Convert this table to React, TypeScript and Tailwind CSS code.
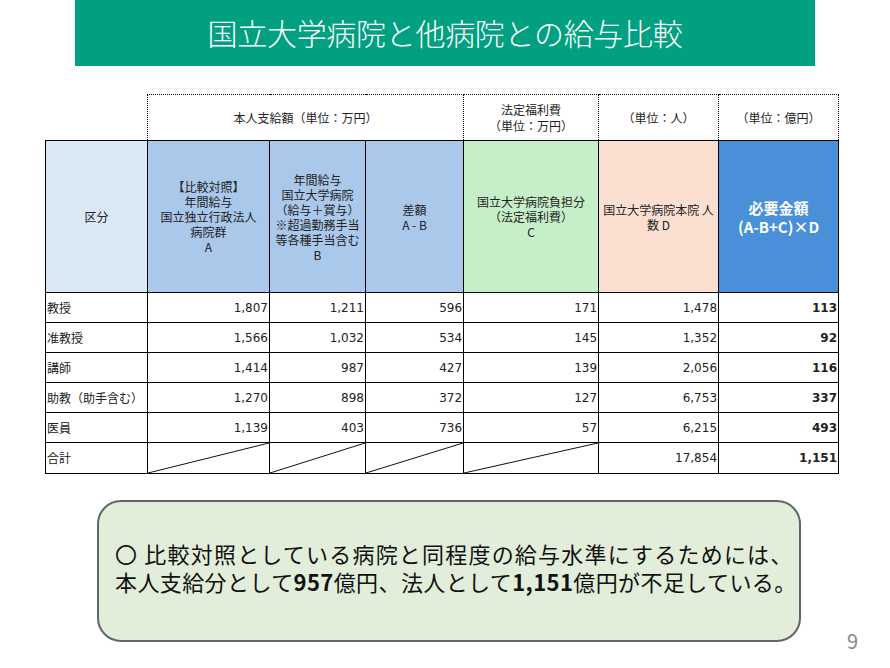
const jp = "font-['Noto_Sans_CJK_JP',sans-serif]";
const num = "font-['DejaVu_Sans','Noto_Sans_CJK_JP',sans-serif]";

const rows = [
  ["教授", "1,807", "1,211", "596", "171", "1,478", "113"],
  ["准教授", "1,566", "1,032", "534", "145", "1,352", "92"],
  ["講師", "1,414", "987", "427", "139", "2,056", "116"],
  ["助教（助手含む）", "1,270", "898", "372", "127", "6,753", "337"],
  ["医員", "1,139", "403", "736", "57", "6,215", "493"],
];

function Diagonal() {
  return (
    <td className="relative border border-black p-0">
      <svg className="absolute inset-0 h-full w-full" preserveAspectRatio="none" viewBox="0 0 100 100">
        <line x1="0" y1="100" x2="100" y2="0" stroke="#111" strokeWidth="1" vectorEffect="non-scaling-stroke" />
      </svg>
    </td>
  );
}

export default function App() {
  return (
    <div className={`relative h-[668px] w-[890px] overflow-hidden bg-white text-[#222] ${jp}`}>
      <div className="ml-[75px] flex h-[66px] w-[740px] items-center justify-center bg-[#00a080] pb-[2px]">
        <h1 className="text-[30px] font-light tracking-[-0.3px] text-white">国立大学病院と他病院との給与比較</h1>
      </div>

      <table className="ml-[45px] mt-[28px] w-[793px] table-fixed border-collapse text-[12px]">
        <colgroup>
          <col className="w-[102px]" />
          <col className="w-[122px]" />
          <col className="w-[96px]" />
          <col className="w-[98px]" />
          <col className="w-[135px]" />
          <col className="w-[120px]" />
          <col className="w-[120px]" />
        </colgroup>
        <thead>
          <tr className="h-[46px] text-center leading-[16px]">
            <th className="border-0 font-normal"></th>
            <th colSpan={3} className="border border-dotted border-black font-normal">本人支給額（単位：万円）</th>
            <th className="border border-dotted border-black font-normal">
              法定福利費
              <br />
              （単位：万円）
            </th>
            <th className="border border-dotted border-black font-normal">（単位：人）</th>
            <th className="border border-dotted border-black font-normal">（単位：億円）</th>
          </tr>
          <tr className="h-[152px] text-center leading-[15px]">
            <th className="border border-black bg-[#dbe8f6] font-normal">区分</th>
            <th className="border border-black bg-[#a9c8ea] font-normal">
              【比較対照】
              <br />
              年間給与
              <br />
              国立独立行政法人
              <br />
              病院群
              <br />A
            </th>
            <th className="border border-black bg-[#a9c8ea] font-normal">
              年間給与
              <br />
              国立大学病院
              <br />
              （給与＋賞与）
              <br />
              ※超過勤務手当
              <br />
              等各種手当含む
              <br />B
            </th>
            <th className="border border-black bg-[#a9c8ea] font-normal">
              差額
              <br />A - B
            </th>
            <th className="border border-black bg-[#c5efc9] font-normal">
              国立大学病院負担分
              <br />
              （法定福利費）
              <br />C
            </th>
            <th className="border border-black bg-[#fbe0d2] font-normal">
              国立大学病院本院 人
              <br />数 D
            </th>
            <th className="border border-black bg-[#4a90d9] text-[15px] font-bold leading-[19px] text-white">
              必要金額
              <br />
              (A-B+C)×D
            </th>
          </tr>
        </thead>
        <tbody>
          {rows.map((r) => (
            <tr key={r[0]} className="h-[30px]">
              <td className="border border-black px-[1px] text-left">{r[0]}</td>
              {r.slice(1, 6).map((v, i) => (
                <td key={i} className={`border border-black px-[1px] text-right ${num}`}>
                  {v}
                </td>
              ))}
              <td className={`border border-black px-[1px] text-right font-bold ${num}`}>{r[6]}</td>
            </tr>
          ))}
          <tr className="h-[31px]">
            <td className="border border-black px-[1px] text-left">合計</td>
            <Diagonal />
            <Diagonal />
            <Diagonal />
            <Diagonal />
            <td className={`border border-black px-[1px] text-right ${num}`}>17,854</td>
            <td className={`border border-black px-[1px] text-right font-bold ${num}`}>1,151</td>
          </tr>
        </tbody>
      </table>

      <div className="mt-[26px] flex items-end">
        <div className="ml-[97px] flex h-[142px] w-[704px] flex-col justify-center rounded-[24px] border-2 border-[#5d666e] bg-[#e2eed9] pb-[9px] pl-[16px] text-[22px] leading-[28px] text-[#111]">
          <p className="whitespace-nowrap tracking-[1.2px]">〇 比較対照としている病院と同程度の給与水準にするためには、</p>
          <p className="whitespace-nowrap tracking-[0.4px]">
            本人支給分として<b>957</b>億円、法人として<b>1,151</b>億円が不足している。
          </p>
        </div>
        <span className="mb-[-9px] ml-[46px] text-[20px] leading-[20px] text-[#8a8a8a]">9</span>
      </div>
    </div>
  );
}
